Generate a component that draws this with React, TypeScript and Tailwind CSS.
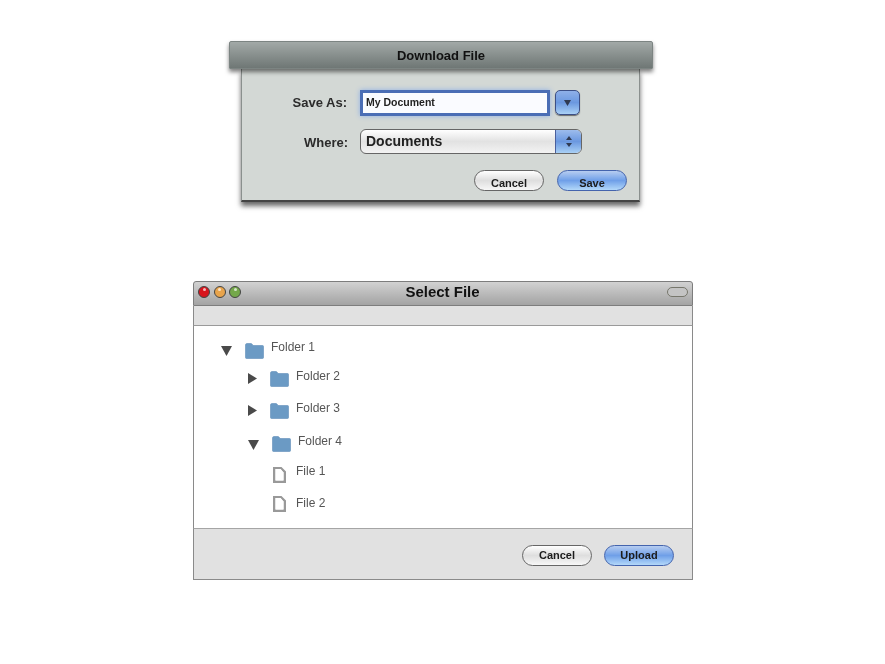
const font = "font-['Liberation_Sans',Arial,sans-serif]";

function AquaButton({ label, primary, clipped }: { label: string; primary?: boolean; clipped?: boolean }) {
    return (
        <div
            className={`w-[70px] h-[21px] rounded-full border-[1.5px] flex justify-center text-[11px] font-bold text-[#1c1c1c] overflow-hidden ${
                clipped ? "items-end" : "items-center"
            } ${
                primary
                    ? "border-[#4464ad] bg-gradient-to-b from-[#b7cdf0] via-[#6f9fe8] to-[#b3d8f9]"
                    : "border-[#666] bg-gradient-to-b from-white via-[#dedede] to-[#f7f7f7]"
            }`}
        >
            <span className="leading-[14px]">{label}</span>
        </div>
    );
}

function Folder({ className = "" }: { className?: string }) {
    return (
        <svg width="19" height="16" viewBox="0 0 19 16" className={`shrink-0 ${className}`}>
            <path d="M0.5 2 Q0.5 0.5 2 0.5 H6 Q7 0.5 8 2.5 H17.5 Q18.5 2.5 18.5 3.5 V14.5 Q18.5 15.5 17.5 15.5 H1.5 Q0.5 15.5 0.5 14.5 Z" fill="#6b9ac4" stroke="#5f8db8" strokeWidth="0.6" />
        </svg>
    );
}

function FileIcon({ className = "" }: { className?: string }) {
    return (
        <svg width="13" height="16" viewBox="0 0 13 16" className={`shrink-0 ${className}`}>
            <path fillRule="evenodd" d="M0 0 H8.5 L13 4.5 V16 H0 Z M2.5 2 V13.5 H10.5 V5.5 L7.5 2 Z" fill="#999" />
            <path d="M2.5 2 H7.5 L10.5 5.5 V13.5 H2.5 Z" fill="#fff" />
        </svg>
    );
}

function TriangleDown({ className = "" }: { className?: string }) {
    return (
        <svg width="11" height="10" viewBox="0 0 11 10" className={`shrink-0 ${className}`}>
            <path d="M0 0 H11 L5.5 10 Z" fill="#4a4a4a" />
        </svg>
    );
}

function TriangleRight({ className = "" }: { className?: string }) {
    return (
        <svg width="9" height="11" viewBox="0 0 9 11" className={`shrink-0 ${className}`}>
            <path d="M0 0 L9 5.5 L0 11 Z" fill="#4a4a4a" />
        </svg>
    );
}

function Light({ color }: { color: string }) {
    return (
        <div className={`relative w-[12px] h-[12px] rounded-full border border-[#444] ${color}`}>
            <div className="absolute left-[3.5px] top-[1px] w-[3px] h-[3px] rounded-full bg-white/70" />
        </div>
    );
}

function DownloadDialog() {
    return (
        <div className="ml-[229px] w-[424px]">
            {/* TITLE */}
            <div className="relative z-10 h-[28px] pt-[1px] border border-[#7c8482] rounded-t-[2px] bg-gradient-to-b from-[#a2a9a7] to-[#6f7775] shadow-[0_3px_4px_rgba(0,0,0,0.5)] flex items-center justify-center text-[13px] font-bold text-[#111]">
                Download File
            </div>

            {/* BODY */}
            <div className="ml-[12px] w-[399px] h-[133px] bg-[#d3d8d5] border-x border-b-[2px] border-x-[#8a908e] border-b-[#444] shadow-[0_4px_5px_rgba(0,0,0,0.6)] pt-[20px]">
                <div className="flex items-center h-[27px]">
                    <span className="w-[105px] text-right text-[13px] font-bold text-[#2b2b2b]">Save As:</span>
                    <div className="ml-[13px] w-[190px] h-[26px] bg-[#fafbff] border-[3px] border-[#4a6db5] shadow-[0_0_5px_#8fb0e6] flex items-center pl-[3px] text-[10.5px] font-bold text-[#222]">
                        My Document
                    </div>
                    <div className="ml-[5px] w-[25px] h-[25px] rounded-[5px] border-[1.5px] border-[#3c4f86] bg-gradient-to-b from-[#8fb0e8] via-[#6b98e0] to-[#a9d0f5] shadow-[0_1px_1px_rgba(0,0,0,0.5)] flex items-center justify-center">
                        <svg width="7" height="6" viewBox="0 0 7 6"><path d="M0 0 H7 L3.5 6 Z" fill="#2f3a52" /></svg>
                    </div>
                </div>

                <div className="flex items-center h-[26px] mt-[12px]">
                    <span className="w-[106px] text-right text-[13px] font-bold text-[#2b2b2b] pt-[4px]">Where:</span>
                    <div className="ml-[12px] w-[222px] h-[25px] rounded-[6px] border border-[#666] overflow-hidden flex bg-gradient-to-b from-white via-[#e2e2e2] to-[#f3f3f3]">
                        <span className="flex-1 pl-[5px] text-[14px] leading-[23px] font-bold text-[#222]">Documents</span>
                        <div className="w-[26px] border-l border-[#4a5f9c] bg-gradient-to-b from-[#9dbcec] via-[#6b98e0] to-[#a9d0f5] flex flex-col items-center justify-center gap-[3px]">
                            <svg width="6" height="4" viewBox="0 0 6 4"><path d="M0 4 H6 L3 0 Z" fill="#2f3a52" /></svg>
                            <svg width="6" height="4" viewBox="0 0 6 4"><path d="M0 0 H6 L3 4 Z" fill="#2f3a52" /></svg>
                        </div>
                    </div>
                </div>

                <div className="flex justify-end gap-[13px] mt-[16px] pr-[12px]">
                    <AquaButton label="Cancel" clipped />
                    <AquaButton label="Save" primary clipped />
                </div>
            </div>
        </div>
    );
}

function SelectWindow() {
    return (
        <div className="ml-[193px] mt-[79px] w-[500px] h-[299px] flex flex-col">
            {/* TITLE BAR */}
            <div className="h-[25px] shrink-0 border border-[#7d7d7d] rounded-t-[3px] bg-gradient-to-b from-[#d2d2d2] to-[#a3a3a3] flex items-center px-[4px] pb-[3px]">
                <div className="flex gap-[3.5px] w-[120px]">
                    <Light color="bg-[#d8141c]" />
                    <Light color="bg-[#e8a44c]" />
                    <Light color="bg-[#74a84a]" />
                </div>
                <span className="flex-1 text-center text-[15px] font-bold text-[#111] pr-[100px]">Select File</span>
                <div className="w-[21px] h-[10px] rounded-full border border-[#77776c] bg-[#c4c4c4]" />
            </div>

            {/* TOOLBAR */}
            <div className="h-[20px] shrink-0 bg-[#e1e1e1] border-x border-x-[#8a8a8a] border-b border-b-[#9a9a9a]" />

            {/* TREE */}
            <div className="h-[202px] shrink-0 bg-white border-x border-x-[#8a8a8a] pt-[14px] flex flex-col">
                <div className="flex items-start pl-[27px] h-[29px] text-[12px] leading-[14px] text-[#555]">
                    <TriangleDown className="mt-[6px]" />
                    <Folder className="ml-[13px] mt-[3px]" />
                    <span className="ml-[7px]">Folder 1</span>
                </div>
                <div className="flex items-start pl-[54px] h-[32px] text-[12px] leading-[14px] text-[#555]">
                    <TriangleRight className="mt-[4px]" />
                    <Folder className="ml-[13px] mt-[2px]" />
                    <span className="ml-[7px]">Folder 2</span>
                </div>
                <div className="flex items-start pl-[54px] h-[33px] text-[12px] leading-[14px] text-[#555]">
                    <TriangleRight className="mt-[4px]" />
                    <Folder className="ml-[13px] mt-[2px]" />
                    <span className="ml-[7px]">Folder 3</span>
                </div>
                <div className="flex items-start pl-[54px] h-[30px] text-[12px] leading-[14px] text-[#555]">
                    <TriangleDown className="mt-[6px]" />
                    <Folder className="ml-[13px] mt-[2px]" />
                    <span className="ml-[7px]">Folder 4</span>
                </div>
                <div className="flex items-start pl-[79px] h-[32px] text-[12px] leading-[14px] text-[#555]">
                    <FileIcon className="mt-[3px]" />
                    <span className="ml-[10px]">File 1</span>
                </div>
                <div className="flex items-start pl-[79px] text-[12px] leading-[14px] text-[#555]">
                    <FileIcon />
                    <span className="ml-[10px]">File 2</span>
                </div>
            </div>

            {/* FOOTER */}
            <div className="flex-1 bg-[#e1e1e1] border border-[#8a8a8a] border-t-[#a5a5a5] flex items-center justify-end gap-[12px] pr-[18px] pt-[2px]">
                <AquaButton label="Cancel" />
                <AquaButton label="Upload" primary />
            </div>
        </div>
    );
}

export default function App() {
    return (
        <div className={`w-[885px] h-[664px] bg-white pt-[41px] overflow-hidden blur-[0.35px] ${font}`}>
            <DownloadDialog />
            <SelectWindow />
        </div>
    );
}
